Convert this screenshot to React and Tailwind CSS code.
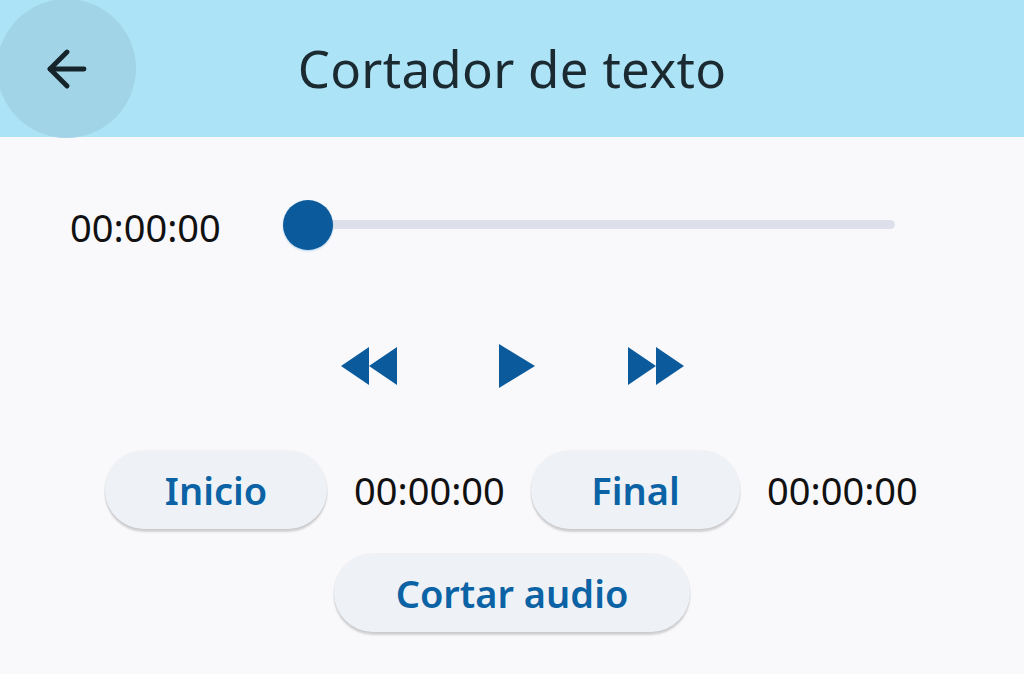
import React from 'react';

const font = { fontFamily: '"Noto Sans", "Open Sans", sans-serif' };

function PillButton({ children, className = '' }) {
  return (
    <button
      className={`h-[78px] rounded-full bg-[#eef2f6] text-[38px] font-semibold text-[#0b63a5] shadow-[0_3px_2px_rgba(0,0,0,0.16),0_0_0_1px_rgba(0,0,0,0.03)] ${className}`}
    >
      {children}
    </button>
  );
}

export default function App() {
  return (
    <div className="h-[674px] w-[1024px] overflow-hidden bg-[#f9f9fc]" style={font}>
      <header className="relative flex h-[137px] items-center justify-center bg-[#ade3f7]">
        <button className="absolute left-[-3px] top-[-1px] flex h-[139px] w-[139px] items-center justify-center rounded-full bg-[#a2d4e7]">
          <svg width="40" height="40" viewBox="0 0 40 40" fill="none" stroke="#15232b" strokeWidth="4.8" strokeLinecap="round" strokeLinejoin="round">
            <path d="M37 20H3" />
            <path d="M20 3L3 20l17 17" />
          </svg>
        </button>
        <h1 className="text-[51px] font-normal tracking-[0.3px] text-[#1b2a31]">Cortador de texto</h1>
      </header>

      <div className="flex flex-col">
        <div className="mt-[56px] flex items-center pl-[70px]">
          <span className="mt-[6px] w-[213px] text-[38px] text-[#111]">00:00:00</span>
          <div className="flex w-[612px] items-center">
            <div className="relative z-10 h-[50px] w-[50px] shrink-0 rounded-full bg-[#0a5a9c] shadow-[0_1px_2px_rgba(0,120,200,0.3)]" />
            <div className="-ml-[4px] h-[9px] flex-1 rounded-full bg-[#dde0ea]" />
          </div>
        </div>

        <div className="mt-[88px] flex items-center justify-center">
          <svg width="56" height="38" viewBox="0 0 56 38" fill="#0a5a9c" className="mr-[102px]">
            <path d="M0 19L28 0v38z" />
            <path d="M28 19L56 0v38z" />
          </svg>
          <svg width="36" height="44" viewBox="0 0 36 44" fill="#0a5a9c" className="mr-[93px]">
            <path d="M0 0l36 22L0 44z" />
          </svg>
          <svg width="56" height="38" viewBox="0 0 56 38" fill="#0a5a9c">
            <path d="M0 0l28 19L0 38z" />
            <path d="M28 0l28 19L28 38z" />
          </svg>
        </div>

        <div className="mt-[63px] flex items-center pl-[105px]">
          <PillButton className="w-[222px]">Inicio</PillButton>
          <span className="ml-[27px] w-[150px] text-[38px] text-[#111]">00:00:00</span>
          <PillButton className="ml-[27px] w-[209px]">Final</PillButton>
          <span className="ml-[27px] text-[38px] text-[#111]">00:00:00</span>
        </div>

        <div className="mt-[25px] flex justify-center">
          <PillButton className="w-[356px]">Cortar audio</PillButton>
        </div>
      </div>
    </div>
  );
}
